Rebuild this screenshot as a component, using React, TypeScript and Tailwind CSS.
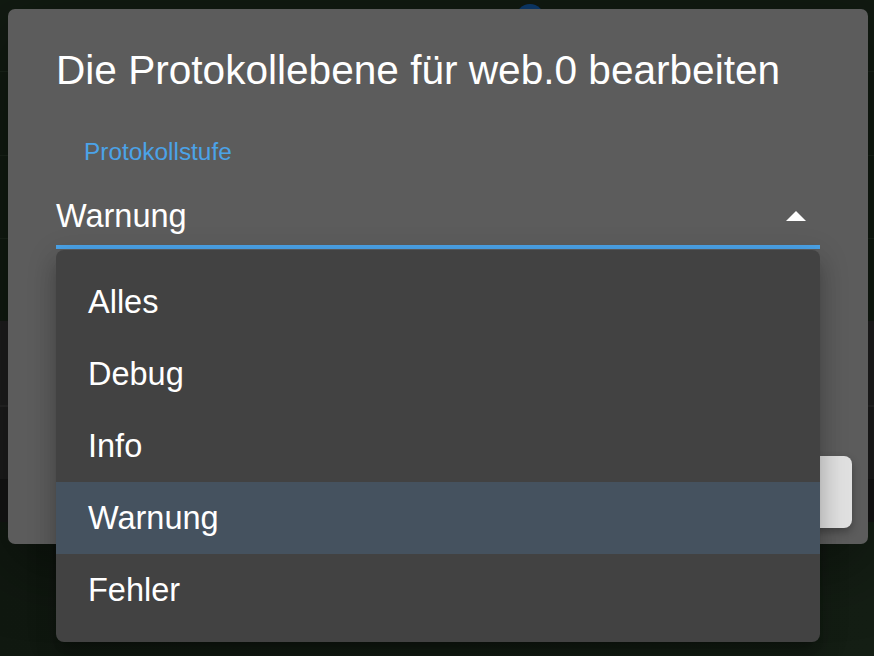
import React from "react";

const items = ["Alles", "Debug", "Info", "Warnung", "Fehler"];

export default function App() {
  return (
    <div
      className="relative h-[656px] w-[874px] overflow-hidden bg-[#111a11]"
      style={{ fontFamily: '"Liberation Sans", Arial, sans-serif' }}
    >
      {/* page behind the backdrop */}
      <div className="flex h-full flex-col">
        <div className="h-[72px] border-b border-[#1a241a]" />
        <div className="h-[84px] border-b border-[#1a241a]" />
        <div className="h-[83px] border-b border-[#1a241a]" />
        <div className="h-[82px]" />
        <div className="h-[86px] border-b-2 border-[#262626] bg-[#1e1e1e]" />
        <div className="h-[72px] bg-[#1c1c1c]" />
        <div className="h-[43px] bg-[#141414]" />
        <div className="flex-1 bg-gradient-to-r from-[#101810] to-[#141e14]" />
      </div>
      <div className="absolute left-[516px] top-[4px] h-[28px] w-[28px] rounded-full bg-[#0c396b]" />

      {/* dialog */}
      <div className="absolute left-[8px] top-[9px] flex h-[535px] w-[860px] flex-col rounded-[7px] bg-[#5c5c5c] shadow-[0_22px_70px_rgba(0,0,0,0.4)]">
        <div className="px-[48px] pt-[33px]">
          <h2 className="text-[40.6px] leading-[56px] text-white">
            Die Protokollebene für web.0 bearbeiten
          </h2>
        </div>
        <div className="px-[48px]">
          <div className="ml-[28px] mt-[42px] text-[24.4px] leading-[24px] text-[#4ba3e8]">
            Protokollstufe
          </div>
          <div className="mt-[36px] flex items-center justify-between border-b-[4px] border-[#4ba3e8] pb-[13px]">
            <span className="text-[32.5px] leading-[32px] text-white">Warnung</span>
            <svg width="20" height="10" viewBox="0 0 20 10" className="mr-[14px]">
              <polygon points="0,10 10,0 20,10" fill="#ffffff" />
            </svg>
          </div>
        </div>
        <div className="mt-auto flex justify-end pb-[16px] pr-[16px]">
          <button className="h-[72px] w-[220px] rounded-[8px] bg-[#e0e0e0] text-[28px] text-[#e0e0e0] shadow-[0_4px_8px_rgba(0,0,0,0.3)]">
            OK
          </button>
        </div>
      </div>

      {/* open select menu */}
      <div className="absolute left-[56px] top-[250px] w-[764px] rounded-[8px] bg-[#424242] py-[16px] shadow-[0_10px_10px_-6px_rgba(0,0,0,0.2),0_16px_20px_2px_rgba(0,0,0,0.14),0_6px_28px_4px_rgba(0,0,0,0.12)]">
        {items.map((it) => (
          <div
            key={it}
            className={
              it === "Warnung"
                ? "flex h-[72px] items-center bg-[#45525f] pl-[32px] text-[32.5px] text-white"
                : "flex h-[72px] items-center pl-[32px] text-[32.5px] text-white"
            }
          >
            {it}
          </div>
        ))}
      </div>
    </div>
  );
}
